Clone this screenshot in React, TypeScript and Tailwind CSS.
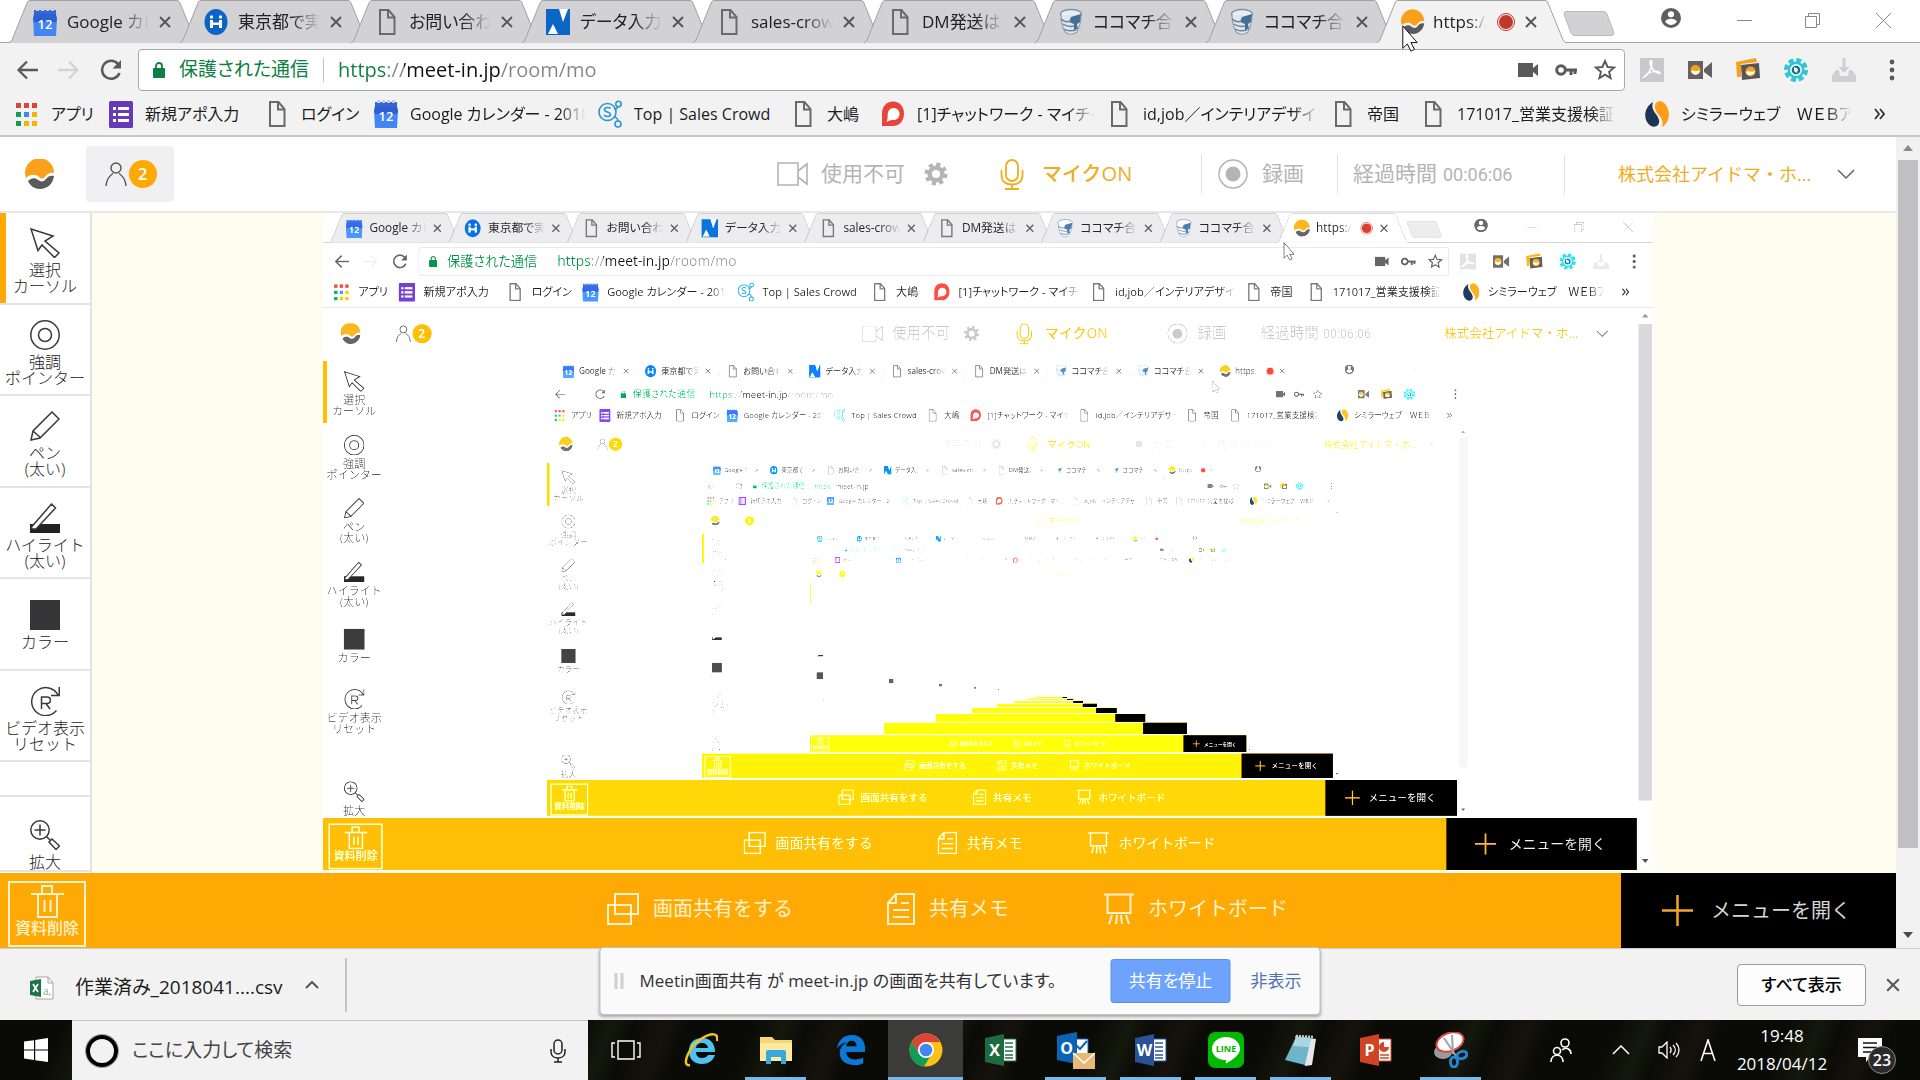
import React from "react";
import clsx from "clsx";

type IconProps = { className?: string };

/* ---------- brand and browser icons ---------- */

const CalendarIcon = ({ className }: IconProps) => (
  <svg viewBox="0 0 24 28" className={className} aria-hidden="true">
    <path d="M1 2h22v8H1z" fill="#3367d6" />
    <path d="M3 0h3v3H3zM8 0h3v3H8zM13 0h3v3h-3zM18 0h3v3h-3z" fill="#c9ccd2" />
    <path d="M1 8h22l1 3-1 17H1L0 11z" fill="#4285f4" />
    <path d="M0 11l1-5h22l1 5-1 3H1z" fill="#2f5fd0" />
    <text x="12" y="21" fontSize="13" textAnchor="middle" fill="#fff" fontFamily="Open Sans, sans-serif" fontWeight="600">12</text>
  </svg>
);

const TokyoIcon = ({ className }: IconProps) => (
  <svg viewBox="0 0 24 28" className={className} aria-hidden="true">
    <ellipse cx="12" cy="14" rx="11.5" ry="13" fill="#0b65c8" />
    <circle cx="7.5" cy="9" r="1.7" fill="#fff" />
    <circle cx="16.5" cy="9" r="1.7" fill="#fff" />
    <path d="M6 12h3v2.500h6V12h3v8h-3v-3H9v3H6z" fill="#fff" />
  </svg>
);

const DocIcon = ({ className }: IconProps) => (
  <svg viewBox="0 0 24 28" className={className} aria-hidden="true" fill="none" stroke="#6a6a6c" strokeWidth="2">
    <path d="M5 2h8.500l6 7v17H5z" />
    <path d="M13 2v7.500h6.500" />
  </svg>
);

const DataIcon = ({ className }: IconProps) => (
  <svg viewBox="0 0 24 28" className={className} aria-hidden="true">
    <path d="M0 1h24v26H0z" fill="#0a66c6" />
    <path d="M13 1h9l-5 13z" fill="#fff" />
    <path d="M2 26l5-10 5 10z" fill="#fff" />
  </svg>
);

const CocoIcon = ({ className }: IconProps) => (
  <svg viewBox="0 0 24 28" className={className} aria-hidden="true" fill="none">
    <ellipse cx="12" cy="6" rx="10.500" ry="4.500" fill="#e8eef4" stroke="#7d93a8" strokeWidth="1.300" />
    <path d="M2 7c0 6 1 11 4 17 3 3 9 3 12 0 3-6 4-11 4-17" fill="#dfe7ee" stroke="#8ea2b4" strokeWidth="1.200" />
    <path d="M12 9l10-3-1 8-3 2 1 5-4 1v-6l-5-2z" fill="#456f95" />
    <path d="M2 11c3 3 7 3 10 2M4 16c3 2 7 3 11 2M5 21c3 2 8 2 12 1" stroke="#6c8297" strokeWidth="1.500" />
  </svg>
);

const MeetLogo = ({ className }: IconProps) => (
  <svg viewBox="0 0 30 30" className={className} aria-hidden="true">
    <path d="M1 19a14.500 14.500 0 1 1 28-5c-4-1-7 1-9 4-2 2-4 2-6 0-3-3-9-3-13 1z" fill="#f9a11b" />
    <path d="M3 22c3-3 7-4 10-1 3 2 6 2 8-1 2-3 5-4 8-3-1 8-7 13-14 13-5 0-10-3-12-8z" fill="#5a5a5c" />
  </svg>
);

const FormIcon = ({ className }: IconProps) => (
  <svg viewBox="0 0 24 28" className={className} aria-hidden="true">
    <rect y="1" width="24" height="27" rx="1.500" fill="#673ab7" />
    <path d="M4 7h3v3H4zM9 7h11v3H9zM4 13h3v3H4zM9 13h11v3H9zM4 19h3v3H4zM9 19h11v3H9z" fill="#fff" />
  </svg>
);

const AppsIcon = ({ className }: IconProps) => {
  const colors = ["#db4437", "#db4437", "#db4437", "#0f9d58", "#4285f4", "#f4b400", "#0f9d58", "#f4b400", "#f4b400"];
  return (
    <svg viewBox="0 0 24 28" className={className} aria-hidden="true">
      {colors.map((c, i) => (
        <rect key={i} x={1 + (i % 3) * 8} y={3 + Math.floor(i / 3) * 9} width="5" height="5" fill={c} />
      ))}
    </svg>
  );
};

const CrowdIcon = ({ className }: IconProps) => (
  <svg viewBox="0 0 24 28" className={className} aria-hidden="true" fill="none" stroke="#2a97cf" strokeWidth="1.600">
    <circle cx="9.500" cy="12" r="8.500" />
    <circle cx="20.500" cy="4" r="2.700" />
    <circle cx="20" cy="24" r="3" />
    <path d="M16 9c2 0 4-1 4-3M16 17c2 0 4 2 4 4M12.500 8.500c-1-1.500-6-1.500-6 1.200 0 2.800 6 1.800 6 4.800 0 2.600-5 2.600-6.500.6" />
  </svg>
);

const ChatworkIcon = ({ className }: IconProps) => (
  <svg viewBox="0 0 24 28" className={className} aria-hidden="true">
    <path d="M12 1.500c6.600 0 11 5 11 12s-4.400 12.500-11 12.500H1V13.500c0-7 4.400-12 11-12z" fill="#e8443a" />
    <path d="M12.500 8c3.600 0 6 2.500 6 6s-2.400 6-6 6c-2 0-5 .5-7 2 1-2 1.200-5 1.200-7.500C6.700 11 9 8 12.500 8z" fill="#fff" />
  </svg>
);

const SimilarIcon = ({ className }: IconProps) => (
  <svg viewBox="0 0 24 28" className={className} aria-hidden="true">
    <path d="M8 2C-2 8-2 21 6 26c5 2 9-1 8-6-1-6-9-9-6-18z" fill="#1c3553" />
    <path d="M17 27c9-5 9-19 1-25-5-2-9 1-8 6 1 7 10 9 7 19z" fill="#ff9c1a" />
  </svg>
);

const PersonCircle = ({ className }: IconProps) => (
  <svg viewBox="0 0 24 24" className={className} aria-hidden="true">
    <circle cx="12" cy="12" r="12" fill="#5f5f62" />
    <circle cx="12" cy="7.500" r="3.700" fill="#fff" />
    <path d="M5 16.500c1-5 13-5 14 0-3 5-11 5-14 0z" fill="#fff" />
  </svg>
);

const CloseX = ({ className }: IconProps) => (
  <svg viewBox="0 0 12 12" className={className} aria-hidden="true" stroke="currentColor" strokeWidth="1.900" fill="none">
    <path d="M1 1l10 10M11 1L1 11" />
  </svg>
);

const Chevron = ({ className, up }: IconProps & { up?: boolean }) => (
  <svg viewBox="0 0 18 10" className={className} aria-hidden="true" fill="none" stroke="currentColor" strokeWidth="1.500">
    <path d={up ? "M1 9l8-8 8 8" : "M1 1l8 8 8-8"} />
  </svg>
);

const Pointer = ({ className }: IconProps) => (
  <svg viewBox="0 0 18 30" className={className} aria-hidden="true">
    <path d="M1 1v25l5-5 4 8 4-2-4-7.500h7z" fill="#fff" stroke="#111" strokeWidth="1.100" />
  </svg>
);

/* ---------- tab strip ---------- */

type Tab = { title: string; Icon: (p: IconProps) => React.ReactElement };

const tabs: Tab[] = [
  { title: "Google カレ", Icon: CalendarIcon },
  { title: "東京都で実", Icon: TokyoIcon },
  { title: "お問い合わせ", Icon: DocIcon },
  { title: "データ入力(", Icon: DataIcon },
  { title: "sales-crowd", Icon: DocIcon },
  { title: "DM発送は", Icon: DocIcon },
  { title: "ココマチ合同", Icon: CocoIcon },
  { title: "ココマチ合同", Icon: CocoIcon },
  { title: "https://", Icon: MeetLogo },
];

function TabStrip({ nested }: { nested: boolean }) {
  return (
    <div className="relative flex h-[43px] shrink-0 items-start border-b border-[#a2a2a4] bg-white pl-[9px]">
      {tabs.map(({ title, Icon }, i) => {
        const active = i === tabs.length - 1;
        return (
          <div key={i} className={clsx("relative -mr-[18px] h-[43px] w-[189px] shrink-0", active && "z-10")}>
            <svg viewBox="0 0 189 43" preserveAspectRatio="none" className="absolute inset-0 size-full" aria-hidden="true">
              <path d="M0 43L3 40 18 3Q19 .5 21 .5H168Q170 .5 171 3L186 40 189 43" fill={active ? "#f2f2f2" : "#d2d2d4"} stroke="#a2a2a4" />
            </svg>
            <div className="relative flex h-[43px] items-center pl-6">
              <Icon className="h-7 w-6 shrink-0" />
              <button
                type="button"
                className={clsx(
                  "overflow-hidden text-left text-[17px] whitespace-nowrap text-[#222] [mask-image:linear-gradient(to_right,black_65%,transparent)]",
                  active ? "ml-2 w-[54px]" : "ml-2.5 w-[82px]",
                )}
              >
                {title}
              </button>
              {active && (
                <span className="ml-2.5 flex size-[18px] shrink-0 items-center justify-center rounded-full border border-[#c0392b]">
                  <span className="size-3.5 rounded-full bg-[#c0392b]" />
                </span>
              )}
              <button type="button" aria-label="タブを閉じる" className="ml-2.5 text-[#555]">
                <CloseX className="size-3" />
              </button>
            </div>
          </div>
        );
      })}
      <button type="button" aria-label="新しいタブ" className="mt-[11px] ml-[15px]">
        <svg viewBox="0 0 52 25" className="h-[25px] w-[52px]" aria-hidden="true">
          <path d="M3 .5H41Q43 .5 44 3L51 22Q51 24 49 24.500H11Q9 24 8 22L1 3Q1 1 3 .5z" fill="#d2d2d4" stroke="#b9b9bb" />
        </svg>
      </button>
      <div className="mr-[29px] ml-auto flex items-center">
        <button type="button" aria-label="ユーザー" className="mt-2 mr-[56px]">
          <PersonCircle className="size-5" />
        </button>
        <button type="button" aria-label="最小化" className="mt-3 mr-[53px]">
          <svg viewBox="0 0 15 15" className="size-[15px]" aria-hidden="true"><path d="M0 7.500h15" stroke="#888" /></svg>
        </button>
        <button type="button" aria-label="元に戻す" className="mt-3 mr-[56px]">
          <svg viewBox="0 0 15 15" className="size-[15px]" aria-hidden="true" fill="none" stroke="#888">
            <path d="M.5 3.500h11v11H.5zM3.500 3.500v-3h11v11h-3" />
          </svg>
        </button>
        <button type="button" aria-label="閉じる" className="mt-3">
          <svg viewBox="0 0 15 15" className="size-[15px]" aria-hidden="true" stroke="#888"><path d="M0 0l15 15M15 0L0 15" /></svg>
        </button>
      </div>
      <Pointer
        className={clsx(
          "pointer-events-none absolute z-20 h-[27px] w-[18px]",
          nested ? "top-[42px] left-[1385px]" : "top-[25px] left-[1401px]",
        )}
      />
    </div>
  );
}

/* ---------- address bar ---------- */

function AddressRow() {
  return (
    <div className="flex h-[49px] shrink-0 items-center bg-[#f2f2f2] pt-1 pr-4 pl-4">
      <button type="button" aria-label="戻る" className="mr-[20px]">
        <svg viewBox="0 0 22 20" className="h-5 w-[22px]" aria-hidden="true" fill="none" stroke="#5a5a5c" strokeWidth="2.300">
          <path d="M22 10H3M11 1.500L2.500 10l8.500 8.500" />
        </svg>
      </button>
      <button type="button" aria-label="進む" className="mr-[20px]">
        <svg viewBox="0 0 22 20" className="h-5 w-[22px]" aria-hidden="true" fill="none" stroke="#d3d3d5" strokeWidth="2.300">
          <path d="M0 10h19M11 1.500l8.500 8.500-8.500 8.500" />
        </svg>
      </button>
      <button type="button" aria-label="再読み込み" className="mr-4">
        <svg viewBox="0 0 22 22" className="size-[22px]" aria-hidden="true" fill="none" stroke="#5a5a5c" strokeWidth="2.500">
          <path d="M19.500 14A9 9 0 1 1 18 5" />
          <path d="M21 1v8.500h-8.500z" fill="#5a5a5c" stroke="none" />
        </svg>
      </button>
      <div className="flex h-[42px] min-w-0 flex-1 items-center rounded-[4px] border border-[#a9a9ab] bg-white pl-3.5">
        <svg viewBox="0 0 12 16" className="h-4 w-3 shrink-0" aria-hidden="true">
          <rect y="6" width="12" height="10" rx="1" fill="#0b8043" />
          <path d="M3 7V4a3 3 0 0 1 6 0v3" fill="none" stroke="#0b8043" strokeWidth="1.800" />
        </svg>
        <span className="ml-3.5 text-[19px] whitespace-nowrap text-[#0b8043]">保護された通信</span>
        <span className="mx-3.5 h-6 w-px bg-[#c4c4c6]" />
        <input
          aria-label="アドレス"
          defaultValue="https://meet-in.jp/room/mo"
          className="min-w-0 flex-1 bg-[linear-gradient(to_right,#0b8043_0,#0b8043_47px,#858587_47px,#858587_66px,#111_66px,#111_162px,#858587_162px)] bg-clip-text text-[20px] text-transparent outline-none"
        />
        <div className="flex items-center gap-[17px] pr-2 text-[#5a5a5c]">
          <svg viewBox="0 0 20 16" className="h-4 w-5" aria-hidden="true" fill="currentColor">
            <path d="M0 1h15v5l5-4v12l-5-4v5H0z" />
          </svg>
          <svg viewBox="0 0 22 14" className="h-3.5 w-[22px]" aria-hidden="true" fill="none" stroke="currentColor" strokeWidth="3">
            <circle cx="6" cy="7" r="4.300" />
            <path d="M10 7h12M16 7v5M20 7v4" />
          </svg>
          <button type="button" aria-label="ブックマークに追加">
            <svg viewBox="0 0 22 21" className="h-[21px] w-[22px]" aria-hidden="true" fill="none" stroke="currentColor" strokeWidth="1.900">
              <path d="M11 2l2.600 6 6.400.6-4.900 4.200 1.500 6.300L11 15.700l-5.600 3.400 1.500-6.300L2 8.600 8.400 8z" />
            </svg>
          </button>
        </div>
      </div>
      <div className="ml-[15px] flex shrink-0 items-center gap-6">
        <svg viewBox="0 0 24 24" className="size-6" aria-hidden="true">
          <path d="M0 0h24v24H0z" fill="#c9c9cb" />
          <path d="M4 19c3-1 8-8 8-15 0-2-2-2-2 0 0 6 6 12 10 11-2-3-11-2-16 4z" fill="none" stroke="#fff" strokeWidth="1.500" />
        </svg>
        <svg viewBox="0 0 24 20" className="h-5 w-6" aria-hidden="true">
          <path d="M0 1h15v18H0zM16 9l8-7v16l-8-6z" fill="#626264" />
          <circle cx="7.500" cy="10" r="5" fill="#f9a11b" />
          <path d="M3 11c2-2 4 2 9-1-1 6-7 6-9 1z" fill="#fff" />
        </svg>
        <svg viewBox="0 0 24 24" className="size-6" aria-hidden="true">
          <path d="M0 4l20-4 1 4-16 2v13H1z" fill="#f9a11b" />
          <path d="M5 7l18-2 1 15-18 2z" fill="#565658" />
          <circle cx="14.500" cy="13.500" r="5" fill="#f9a11b" />
          <path d="M10 14c2-2 5 1 9-1-1 5-8 6-9 1z" fill="#fff" />
        </svg>
        <svg viewBox="0 0 24 24" className="size-6" aria-hidden="true">
          <circle cx="12" cy="12" r="10" fill="none" stroke="#2fc4d6" strokeWidth="4" strokeDasharray="5 2.850" />
          <circle cx="12" cy="12" r="8.500" fill="#2fc4d6" />
          <circle cx="12" cy="12" r="6" fill="#e9f7f9" />
          <circle cx="12" cy="12" r="4.300" fill="#146f86" />
          <path d="M10 9l4 2-1 4-3-2z" fill="#fff" />
        </svg>
        <svg viewBox="0 0 24 24" className="size-6" aria-hidden="true" fill="#cfcfd1">
          <path d="M10.500 0h3v9h4L12 15 6.500 9h4zM4 12h3l1 6h8l1-6h3l4 6v6H0v-6z" />
        </svg>
        <button type="button" aria-label="メニュー" className="flex w-6 justify-center">
          <svg viewBox="0 0 6 22" className="h-[22px] w-1.5" aria-hidden="true" fill="#5a5a5c">
            <circle cx="3" cy="3" r="2.400" /><circle cx="3" cy="11" r="2.400" /><circle cx="3" cy="19" r="2.400" />
          </svg>
        </button>
      </div>
    </div>
  );
}

/* ---------- bookmarks ---------- */

const bookmarks: { title: string; width: string; Icon: Tab["Icon"]; fade?: boolean }[] = [
  { title: "アプリ", width: "w-[94px]", Icon: AppsIcon },
  { title: "新規アポ入力", width: "w-[156px]", Icon: FormIcon },
  { title: "ログイン", width: "w-[109px]", Icon: DocIcon },
  { title: "Google カレンダー - 2018年", width: "w-[224px]", Icon: CalendarIcon, fade: true },
  { title: "Top | Sales Crowd", width: "w-[193px]", Icon: CrowdIcon },
  { title: "大嶋", width: "w-[90px]", Icon: DocIcon },
  { title: "[1]チャットワーク - マイチャ", width: "w-[226px]", Icon: ChatworkIcon, fade: true },
  { title: "id,job／インテリアデザイン", width: "w-[224px]", Icon: DocIcon, fade: true },
  { title: "帝国", width: "w-[90px]", Icon: DocIcon },
  { title: "171017_営業支援検証", width: "w-[224px]", Icon: DocIcon, fade: true },
  { title: "シミラーウェブ　ＷＥＢア", width: "w-[219px]", Icon: SimilarIcon, fade: true },
];

function Bookmarks() {
  return (
    <nav className="flex h-[45px] shrink-0 items-center border-b-2 border-[#c9c9cb] bg-[#f2f2f2] pl-[15px]">
      {bookmarks.map(({ title, width, Icon, fade }) => (
        <a key={title} href="#" className={clsx("flex shrink-0 items-center gap-3 text-[16px] text-[#1c1c1c]", width)}>
          <Icon className="h-7 w-6 shrink-0" />
          <span
            className={clsx(
              "overflow-hidden whitespace-nowrap",
              fade && "mr-3 [mask-image:linear-gradient(to_right,black_85%,transparent)]",
            )}
          >
            {title}
          </span>
        </a>
      ))}
      <button type="button" aria-label="他のブックマーク" className="ml-2.5 text-[#333]">
        <svg viewBox="0 0 11 12" className="h-3 w-[11px]" aria-hidden="true" fill="none" stroke="currentColor" strokeWidth="1.800">
          <path d="M1 1l4 5-4 5M6 1l4 5-4 5" />
        </svg>
      </button>
    </nav>
  );
}

/* ---------- meeting page ---------- */

function MeetingHeader() {
  return (
    <header className="flex h-[76px] shrink-0 items-center border-b-2 border-[#e8e8ea] bg-white text-[#b4b4b6] [font-feature-settings:normal]">
      <MeetLogo className="ml-[25px] size-[30px]" />
      <button type="button" aria-label="参加者 2" className="ml-[31px] flex h-14 w-[88px] items-center justify-center gap-px rounded-[4px] bg-[#f0eff1]">
        <svg viewBox="0 0 24 26" className="h-[26px] w-6" aria-hidden="true" fill="none" stroke="#555" strokeWidth="1.400">
          <circle cx="12" cy="7" r="5" />
          <path d="M2 25c.5-7 3-10 7-12.500M22 25c-.5-7-3-10-7-12.500" />
        </svg>
        <span className="flex size-7 items-center justify-center rounded-full bg-[#ffa905] text-[17px] font-semibold text-white">2</span>
      </button>
      <div className="ml-auto flex shrink-0 items-center text-[21px] whitespace-nowrap">
        <button type="button" className="flex w-[147px] items-center gap-3">
          <svg viewBox="0 0 32 24" className="h-6 w-8" aria-hidden="true" fill="none" stroke="currentColor" strokeWidth="1.600">
            <path d="M1 1h20v8l9-7v20l-9-7v8H1zM21 9v6" />
          </svg>
          使用不可
        </button>
        <button type="button" aria-label="設定" className="w-[76px]">
          <svg viewBox="0 0 24 24" className="size-6" aria-hidden="true">
            <circle cx="12" cy="12" r="9.500" fill="none" stroke="currentColor" strokeWidth="4" strokeDasharray="4 3.460" />
            <circle cx="12" cy="12" r="6.300" fill="none" stroke="currentColor" strokeWidth="4.500" />
          </svg>
        </button>
        <button type="button" className="flex w-[201px] items-center gap-[18px] text-[20px] font-medium text-[#f0ac1c]">
          <svg viewBox="0 0 24 31" className="h-[31px] w-6" aria-hidden="true" fill="none" stroke="currentColor" strokeWidth="1.800">
            <rect x="6" y="1" width="12" height="21" rx="6" />
            <path d="M1.500 11v5c0 6 4 9.500 10.500 9.500S22.500 22 22.500 16v-5M12 25v5M5 30h14" />
          </svg>
          マイクON
        </button>
        <button type="button" className="flex h-[41px] w-[136px] items-center gap-3.5 border-l border-[#e2e2e4] pl-4">
          <svg viewBox="0 0 30 30" className="size-[30px]" aria-hidden="true">
            <circle cx="15" cy="15" r="14" fill="none" stroke="currentColor" strokeWidth="1.500" />
            <circle cx="15" cy="15" r="7.500" fill="currentColor" />
          </svg>
          録画
        </button>
        <div className="flex h-[41px] w-[227px] items-center gap-1.5 border-l border-[#e2e2e4] pl-[15px]">
          <span>経過時間</span>
          <span className="[font-family:Roboto,sans-serif] text-[18px]">00:06:06</span>
        </div>
        <button type="button" className="flex h-[41px] w-[332px] items-center border-l border-[#e2e2e4] pl-[53px] text-[18px] text-[#f0ac1c]">
          <span className="w-[219px] text-left">株式会社アイドマ・ホ...</span>
          <Chevron className="h-2.5 w-[18px] text-[#666]" />
        </button>
      </div>
    </header>
  );
}

const sketch = { fill: "none", stroke: "#3a3a3c", strokeWidth: 1.5 } as const;

const tools: { lines: string[]; icon: React.ReactElement; pad?: string }[] = [
  {
    lines: ["選択", "カーソル"],
    icon: (
      <svg viewBox="0 0 30 30" className="size-[30px]" aria-hidden="true" {...sketch}>
        <path d="M1 1l22 7-8 5 14 12-4.500 4.500L12 17 8 22.500z" />
      </svg>
    ),
  },
  {
    lines: ["強調", "ポインター"],
    icon: (
      <svg viewBox="0 0 30 30" className="size-[30px]" aria-hidden="true" {...sketch}>
        <circle cx="15" cy="15" r="14.200" />
        <circle cx="15" cy="15" r="6.500" />
      </svg>
    ),
  },
  {
    lines: ["ペン", "(太い)"],
    icon: (
      <svg viewBox="0 0 30 30" className="size-[30px]" aria-hidden="true" {...sketch}>
        <path d="M1 29l2-9L22 1l7 7-19 19zM3 20l8 7" />
      </svg>
    ),
  },
  {
    lines: ["ハイライト", "(太い)"],
    icon: (
      <svg viewBox="0 0 30 30" className="size-[30px]" aria-hidden="true">
        <path d="M0 21h30v9H0z" fill="#222" />
        <path d="M1.500 24L21.500 1l4 4L6 26H2z" fill="#fff" stroke="#3a3a3c" strokeWidth="1.500" />
      </svg>
    ),
  },
  { lines: ["カラー"], icon: <span className="size-[30px] bg-[#353537]" />, pad: "pt-[21px]" },
  {
    lines: ["ビデオ表示", "リセット"],
    icon: (
      <svg viewBox="0 0 30 30" className="size-[30px]" aria-hidden="true" {...sketch}>
        <path d="M26.500 24.500A14 14 0 1 1 28 9M29.200 1v8.500H21" />
        <path d="M11.500 23V11h5.500c4.500 0 4.500 6.500 0 6.500h-5.500M16 17.500l4 5.500" />
      </svg>
    ),
  },
];

function ToolButton({ lines, icon, pad = "pt-[15px]", active }: { lines: string[]; icon: React.ReactElement; pad?: string; active?: boolean }) {
  return (
    <button
      type="button"
      className={clsx(
        "relative flex w-full flex-col items-center overflow-hidden border-b-2 border-[#e3e3e5] text-[16px] leading-4 font-light whitespace-nowrap text-[#222]",
        pad,
      )}
    >
      {active && <span className="absolute inset-y-0 left-0 w-1.5 bg-[#ffa905]" />}
      {icon}
      <span className="mt-1 [font-feature-settings:normal]">
        {lines.map((l) => (
          <span key={l} className="block">{l}</span>
        ))}
      </span>
    </button>
  );
}

function ToolPalette() {
  return (
    <aside className="flex w-[92px] shrink-0 flex-col overflow-hidden border-r-2 border-[#e3e3e5] bg-white">
      <div className="grid h-[549px] shrink-0 grid-rows-6">
        {tools.map((t, i) => (
          <ToolButton key={t.lines[0]} {...t} active={i === 0} />
        ))}
      </div>
      <div className="h-[35px] shrink-0 border-b-2 border-[#e3e3e5]" />
      <ToolButton
        lines={["拡大"]}
        pad="pt-[23px]"
        icon={
          <svg viewBox="0 0 30 30" className="size-[30px]" aria-hidden="true" {...sketch}>
            <circle cx="10" cy="10" r="9.200" />
            <path d="M10 4.500v11M4.500 10h11M16.500 16.500l4.500 4.500M19 22l3-3 7.500 7-3.500 3.500z" />
          </svg>
        }
      />
    </aside>
  );
}

const FooterAction = ({ icon, label, className }: { icon: React.ReactElement; label: string; className?: string }) => (
  <button type="button" className={clsx("flex items-center gap-3.5", className)}>
    {icon}
    {label}
  </button>
);

function MeetingFooter() {
  const line = { fill: "none", stroke: "#fff3cf", strokeWidth: 2 } as const;
  return (
    <footer className="flex h-[75px] shrink-0 items-stretch bg-[#ffa905] text-[20px] whitespace-nowrap text-[#fff3cf] [font-feature-settings:normal]">
      <button type="button" className="mt-2 mb-px ml-2 flex w-[78px] flex-col items-center border-2 border-[#fff3cf] pt-0.5 text-[16px] leading-5 font-medium">
        <svg viewBox="0 0 33 33" className="size-[33px] shrink-0" aria-hidden="true" {...line}>
          <path d="M0 9h33M11 9V1h10v8M7 9v23h19V9M13.500 15v12M19.500 15v12" />
        </svg>
        <span>資料削除</span>
      </button>
      <div className="flex min-w-0 flex-1 items-center justify-center pb-1 pl-[188px]">
        <FooterAction
          className="w-[280px]"
          label="画面共有をする"
          icon={
            <svg viewBox="0 0 32 32" className="size-8" aria-hidden="true" {...line}>
              <path d="M8 1h23v20H8zM1 12h23v19H1z" />
            </svg>
          }
        />
        <FooterAction
          className="w-[217px]"
          label="共有メモ"
          icon={
            <svg viewBox="0 0 28 32" className="h-8 w-7" aria-hidden="true" {...line}>
              <path d="M9 1h18v30H1V10zM9 1v9H1M14 10h8M6 17h16M6 24h16" />
            </svg>
          }
        />
        <FooterAction
          label="ホワイトボード"
          icon={
            <svg viewBox="0 0 30 32" className="h-8 w-[30px]" aria-hidden="true" {...line}>
              <path d="M0 1.500h30M3.500 2v18h23V2M8 22L5 31M13 22l-1 9M17 22l1 9M22 22l3 9" />
            </svg>
          }
        />
      </div>
      <button type="button" className="flex w-[275px] items-center gap-[18px] bg-black pl-[41px] text-[#d6d6d6]">
        <svg viewBox="0 0 31 31" className="size-[31px]" aria-hidden="true" stroke="#f5a623" strokeWidth="2.500">
          <path d="M15.500 0v31M0 15.500h31" />
        </svg>
        メニューを開く
      </button>
    </footer>
  );
}

function ScrollRail() {
  return (
    <div className="flex w-6 shrink-0 flex-col items-center bg-[#f1f1f1]" aria-hidden="true">
      <svg viewBox="0 0 10 6" className="mt-2 h-1.5 w-2.5"><path d="M5 0l5 6H0z" fill="#8a8a8c" /></svg>
      <span className="mt-[9px] w-5 flex-1 bg-[#c1c1c3]" />
      <svg viewBox="0 0 10 6" className="mt-[84px] mb-[10px] h-1.5 w-2.5"><path d="M5 6L0 0h10z" fill="#4a4a4c" /></svg>
    </div>
  );
}

/* ---------- shared screen: each capture holds the next one ---------- */

const DETAILED = 4;
const DEEPEST = 11;

function SharedScreen({ depth }: { depth: number }) {
  return (
    <main className="flex min-w-0 flex-1 items-start justify-center overflow-hidden bg-[#fffdf0] pr-3">
      {depth < DEEPEST && (
        <div inert className="h-[657px] w-[1331px] shrink-0 overflow-hidden bg-white brightness-[1.13]">
          <div className="flex h-[948px] w-[1920px] origin-top-left scale-[0.693] flex-col">
            {depth < DETAILED ? <BrowserWindow depth={depth + 1} /> : <DistantWindow depth={depth + 1} />}
          </div>
        </div>
      )}
    </main>
  );
}

function DistantWindow({ depth }: { depth: number }) {
  return (
    <div className="flex min-h-0 flex-1 bg-white">
      <div className="flex min-w-0 flex-1 flex-col">
        <div className="flex min-h-0 flex-1 pt-[213px]">
          <div className="flex w-[92px] shrink-0 flex-col items-center pt-[387px]">
            <span className="size-[30px] bg-[#353537]" />
          </div>
          <SharedScreen depth={depth} />
        </div>
        <div className="flex h-[75px] shrink-0 bg-[#ffa905]">
          <span className="ml-auto w-[275px] bg-black" />
        </div>
      </div>
      <div className="w-6 shrink-0" />
    </div>
  );
}

function BrowserWindow({ depth }: { depth: number }) {
  return (
    <div className="flex min-h-0 flex-1 flex-col overflow-hidden bg-white">
      <TabStrip nested={depth > 0} />
      <AddressRow />
      <Bookmarks />
      <div className="flex min-h-0 flex-1">
        <div className="flex min-w-0 flex-1 flex-col">
          <MeetingHeader />
          <div className="flex min-h-0 flex-1">
            <ToolPalette />
            <SharedScreen depth={depth} />
          </div>
          <MeetingFooter />
        </div>
        <ScrollRail />
      </div>
    </div>
  );
}

/* ---------- downloads and share notice ---------- */

function DownloadShelf() {
  return (
    <div className="relative flex h-[72px] shrink-0 items-center border-t border-[#cfcfd1] bg-[#f2f2f2] whitespace-nowrap">
      <button type="button" className="ml-[30px] flex items-center gap-[21px] pt-1.5 text-[19px] text-[#1c1c1c]">
        <svg viewBox="0 0 24 24" className="size-6" aria-hidden="true">
          <path d="M6 1h12l5 6v16H6z" fill="#fff" stroke="#a5a5a7" />
          <path d="M18 1v6h5" fill="none" stroke="#a5a5a7" />
          <path d="M0 5l11-2v18L0 19z" fill="#1f7246" />
          <path d="M3 8l5 8M8 8l-5 8" stroke="#fff" strokeWidth="1.700" />
          <text x="13" y="19" fontSize="10" fill="#6db38a">a,</text>
        </svg>
        作業済み_2018041....csv
      </button>
      <button type="button" aria-label="ダウンロードメニュー" className="ml-[22px] text-[#555]">
        <svg viewBox="0 0 14 8" className="h-2 w-3.5" aria-hidden="true" fill="none" stroke="currentColor" strokeWidth="2"><path d="M1 7l6-6 6 6" /></svg>
      </button>
      <span className="ml-[26px] h-[54px] w-0.5 bg-[#c6c6c8]" />
      <button type="button" className="ml-auto h-[42px] w-[129px] rounded-[4px] border border-[#9b9b9d] bg-[#fdfdfe] text-[17px] font-medium text-black">すべて表示</button>
      <button type="button" aria-label="閉じる" className="mr-5 ml-5 text-[#5a5a5c]">
        <CloseX className="size-3.5" />
      </button>

      <div role="status" className="absolute -top-0.5 left-1/2 flex h-[68px] w-[721px] -translate-x-1/2 items-center rounded-[4px] border border-[#c2c2c4] bg-[#fafafa] pl-3.5 text-[17px] text-[#333] shadow-[0_2px_3px_rgba(0,0,0,0.3)]">
        <span className="mr-4 h-4 w-[9px] border-x-[3px] border-[#d0d0d2]" />
        Meetin画面共有 が meet-in.jp の画面を共有しています。
        <button type="button" className="mr-5 ml-auto h-11 w-[120px] rounded-[3px] border border-[#5e8fe6] bg-[#6da3fd] text-[17px] text-white">共有を停止</button>
        <button type="button" className="mr-[18px] text-[#5272b8]">非表示</button>
      </div>
    </div>
  );
}

/* ---------- taskbar ---------- */

const OfficeIcon = ({ letter, color, dark }: { letter: string; color: string; dark: string }) => (
  <svg viewBox="0 0 32 32" className="size-8" aria-hidden="true">
    <path d="M16 5h15v22H16z" fill="#fff" stroke={color} />
    <path d="M20 9h8M20 13h8M20 17h8M20 21h8M20 24h8" stroke={color} strokeWidth="1.600" />
    <path d="M0 4l19-4v32L0 28z" fill={dark} />
    <text x="9.500" y="22" fontSize="16" fontWeight="700" textAnchor="middle" fill="#fff" fontFamily="Open Sans, sans-serif">{letter}</text>
  </svg>
);

const edgePath = "M1 15C2 6 8 0 17 0c9 0 14 6 14 14v4H11c0 5 4 8 9 8 4 0 7-1 9-2v6c-3 2-6 2-10 2C10 32 4 27 4 19c0-5 3-9 8-11-5 0-9 3-11 7zm10-3h11c0-4-2-6-5-6s-6 2-6 6z";

const apps: { name: string; open?: boolean; current?: boolean; icon: React.ReactElement }[] = [
  {
    name: "タスクビュー",
    icon: (
      <svg viewBox="0 0 30 20" className="h-5 w-[30px]" aria-hidden="true" fill="none" stroke="#fff" strokeWidth="1.400">
        <path d="M7 1h16v18H7zM4 3H1v14h3M26 3h3v14h-3" />
      </svg>
    ),
  },
  {
    name: "Internet Explorer",
    icon: (
      <svg viewBox="0 0 34 34" className="size-[34px]" aria-hidden="true">
        <path d="M18 5c8 0 13 5 13 14H12c0 4 3 6 6 6s5-1 6-3h7c-2 6-7 9-13 9C10 31 5 26 5 18S10 5 18 5zm-6 10h12c0-3-3-5-6-5s-6 2-6 5z" fill="#4fc3f0" />
        <path d="M6 32C-4 34 6 12 17 6 28-1 35 0 33 8" fill="none" stroke="#f5c324" strokeWidth="2.500" />
      </svg>
    ),
  },
  {
    name: "エクスプローラー",
    open: true,
    icon: (
      <svg viewBox="0 0 32 28" className="h-7 w-8" aria-hidden="true">
        <path d="M0 1h12l3 3h17v21H0z" fill="#f7d774" />
        <path d="M0 7h32v18H0z" fill="#fde9a0" />
        <path d="M6 28V16q0-2 2-2h16q2 0 2 2v12h-5v-7H11v7z" fill="#38a9dd" />
      </svg>
    ),
  },
  { name: "Edge", icon: <svg viewBox="0 0 32 32" className="size-[30px]" aria-hidden="true"><path fillRule="evenodd" d={edgePath} fill="#0a78d7" /></svg> },
  {
    name: "Chrome",
    open: true,
    current: true,
    icon: (
      <svg viewBox="0 0 34 34" className="size-[34px]" aria-hidden="true">
        <circle cx="17" cy="17" r="16.500" fill="#fbc116" />
        <path d="M17 9h14.300A16.500 16.500 0 0 0 2.700 8.800L10 21z" fill="#db4437" />
        <path d="M2.700 8.800A16.500 16.500 0 0 0 15 33.400L22 22 10 21z" fill="#0f9d58" />
        <circle cx="17" cy="17" r="8" fill="#fff" />
        <circle cx="17" cy="17" r="6.300" fill="#4285f4" />
      </svg>
    ),
  },
  { name: "Excel", icon: <OfficeIcon letter="X" color="#217346" dark="#1d6b40" /> },
  {
    name: "Outlook",
    open: true,
    icon: (
      <svg viewBox="0 0 38 38" className="size-[38px]" aria-hidden="true">
        <path d="M14 8h17v16H14z" fill="#fff" stroke="#0a64b4" />
        <path d="M19 14l4 4 7-8" fill="none" stroke="#0a64b4" strokeWidth="2" />
        <path d="M0 5l20-4v32L0 29z" fill="#0a64b4" />
        <text x="9.500" y="23" fontSize="16" fontWeight="700" textAnchor="middle" fill="#fff" fontFamily="Open Sans, sans-serif">O</text>
        <path d="M16 22h22v16H16z" fill="#e9b877" />
        <path d="M16 22l11 10 11-10" fill="none" stroke="#fff" strokeWidth="1.500" />
      </svg>
    ),
  },
  { name: "Word", open: true, icon: <OfficeIcon letter="W" color="#2b579a" dark="#2a5294" /> },
  {
    name: "LINE",
    open: true,
    icon: (
      <svg viewBox="0 0 36 36" className="size-9" aria-hidden="true">
        <rect width="36" height="36" rx="7" fill="#00b900" />
        <path d="M18 5c8 0 14 5 14 12 0 6-8 11-13 14-1 .5-2 0-1-2v-1C9 28 4 23 4 17 4 10 10 5 18 5z" fill="#fff" />
        <text x="18" y="20" fontSize="9" fontWeight="700" textAnchor="middle" fill="#00b900" fontFamily="Open Sans, sans-serif">LINE</text>
      </svg>
    ),
  },
  {
    name: "メモ帳",
    open: true,
    icon: (
      <svg viewBox="0 0 34 34" className="size-[34px]" aria-hidden="true">
        <path d="M11 3l21 3-4 26-7 1z" fill="#e4e6e8" />
        <path d="M12 4l15 1-6 27L1 27z" fill="#6fb4c8" />
        <path d="M12 4l15 1-2 9-16-1z" fill="#a9d8e2" />
        <path d="M12 3l18 1" stroke="#c4c9cc" strokeWidth="2.500" strokeDasharray="2 1" />
      </svg>
    ),
  },
  {
    name: "PowerPoint",
    icon: (
      <svg viewBox="0 0 32 32" className="size-8" aria-hidden="true">
        <path d="M16 5h15v22H16z" fill="#fff" stroke="#d24726" />
        <path d="M24 8v5h5a5 5 0 1 1-5-5z" fill="#d24726" />
        <path d="M20 21h9M20 24h9" stroke="#d24726" strokeWidth="1.600" />
        <path d="M0 4l19-4v32L0 28z" fill="#d04423" />
        <text x="9.500" y="22" fontSize="16" fontWeight="700" textAnchor="middle" fill="#fff" fontFamily="Open Sans, sans-serif">P</text>
      </svg>
    ),
  },
  {
    name: "Snipping Tool",
    open: true,
    icon: (
      <svg viewBox="0 0 34 36" className="h-9 w-[34px]" aria-hidden="true">
        <ellipse cx="9" cy="20" rx="9" ry="7" fill="#9a9a9c" />
        <ellipse cx="16" cy="10" rx="14" ry="9" transform="rotate(-20 16 10)" fill="#fff" stroke="#d8443f" strokeWidth="2" />
        <path d="M10 6l12 18M18 3l1 19" stroke="#9da3a8" strokeWidth="2" />
        <ellipse cx="28" cy="23" rx="5" ry="3.500" transform="rotate(-15 28 23)" fill="none" stroke="#2485d0" strokeWidth="3" />
        <ellipse cx="20" cy="30" rx="3.500" ry="5" fill="none" stroke="#2485d0" strokeWidth="3" />
      </svg>
    ),
  },
];

function Taskbar() {
  return (
    <div className="flex h-[60px] shrink-0 bg-[#0a0b07] bg-[repeating-linear-gradient(112deg,transparent_0,transparent_60px,rgba(60,70,30,0.22)_90px,transparent_110px,rgba(70,50,30,0.2)_140px,transparent_160px)] text-white">
      <button type="button" aria-label="スタート" className="flex w-[72px] items-center justify-center">
        <svg viewBox="0 0 24 24" className="size-6" aria-hidden="true" fill="#fff">
          <path d="M0 3.500l10-1.300v9.300H0zM11.200 2L24 0v11.500H11.200zM0 12.600h10V22L0 20.600zM11.200 12.600H24V24l-12.800-1.800z" />
        </svg>
      </button>
      <label className="flex w-[516px] items-center border-t border-[#c6c6c8] bg-[#f2f2f2] pr-[22px] pl-[14px]">
        <span className="size-8 shrink-0 rounded-full border-4 border-black ring-1 ring-[#999]" />
        <input
          type="text"
          aria-label="検索"
          placeholder="ここに入力して検索"
          className="ml-3.5 min-w-0 flex-1 text-[19px] outline-none placeholder:text-[#444]"
        />
        <svg viewBox="0 0 16 24" className="h-6 w-4" aria-hidden="true" fill="none" stroke="#222" strokeWidth="1.500">
          <rect x="4" y="1" width="8" height="14" rx="4" />
          <path d="M1 10v3c0 8 14 8 14 0v-3M8 19v4M4 23h8" />
        </svg>
      </label>
      <div className="flex">
        {apps.map(({ name, icon, open, current }) => (
          <button
            key={name}
            type="button"
            aria-label={name}
            className={clsx("relative flex w-[75px] items-center justify-center", current && "bg-[#3b3b39]")}
          >
            {icon}
            {open && <span className={clsx("absolute bottom-0 h-[3px] bg-[#76b9ed]", current ? "inset-x-0" : "inset-x-[7px]")} />}
          </button>
        ))}
      </div>
      <div className="mr-6 ml-auto flex shrink-0 items-center">
        <button type="button" aria-label="People" className="mr-10">
          <svg viewBox="0 0 22 24" className="h-6 w-[22px]" aria-hidden="true" fill="none" stroke="#fff" strokeWidth="1.600">
            <circle cx="15" cy="5" r="4" /><circle cx="7" cy="13" r="3.500" />
            <path d="M1 24c0-9 12-9 12 0M12 12c5-4 9 0 9 4" />
          </svg>
        </button>
        <button type="button" aria-label="隠れているインジケーター" className="mr-7">
          <Chevron up className="h-2.5 w-[18px]" />
        </button>
        <button type="button" aria-label="音量" className="mr-5">
          <svg viewBox="0 0 22 18" className="h-[18px] w-[22px]" aria-hidden="true" fill="none" stroke="#fff" strokeWidth="1.300">
            <path d="M1 6h3l5-5v16l-5-5H1zM12 6c1.500 2 1.500 4 0 6M15 4c3 3 3 7 0 10M18 2c4 4 4 10 0 14" />
          </svg>
        </button>
        <button type="button" aria-label="入力モード A" className="mr-[18px]">
          <svg viewBox="0 0 16 22" className="h-[22px] w-4" aria-hidden="true" fill="none" stroke="#fff" strokeWidth="1.600">
            <path d="M1 22L8 1l7 21M3.500 14.500h9" />
          </svg>
        </button>
        <div className="w-[96px] text-center text-[17px] leading-7 whitespace-nowrap">
          <div>19:48</div>
          <div>2018/04/12</div>
        </div>
        <button type="button" aria-label="通知 23件" className="relative ml-7 h-10 w-[38px]">
          <svg viewBox="0 0 24 24" className="size-6" aria-hidden="true">
            <path d="M0 0h24v19H12l-4 5v-5H0z" fill="#fff" />
            <path d="M5 5h14M5 9.500h14M5 14h14" stroke="#111" strokeWidth="1.600" />
          </svg>
          <span className="absolute right-0 -bottom-1 flex size-7 items-center justify-center rounded-full border border-[#888] bg-[#2b2b2b] text-[16px] font-semibold">23</span>
        </button>
      </div>
    </div>
  );
}

export default function App() {
  return (
    <div className="flex h-screen flex-col overflow-hidden bg-white [font-family:'Open_Sans','Noto_Sans_CJK_JP',sans-serif] [font-feature-settings:'palt']">
      <BrowserWindow depth={0} />
      <DownloadShelf />
      <Taskbar />
    </div>
  );
}
